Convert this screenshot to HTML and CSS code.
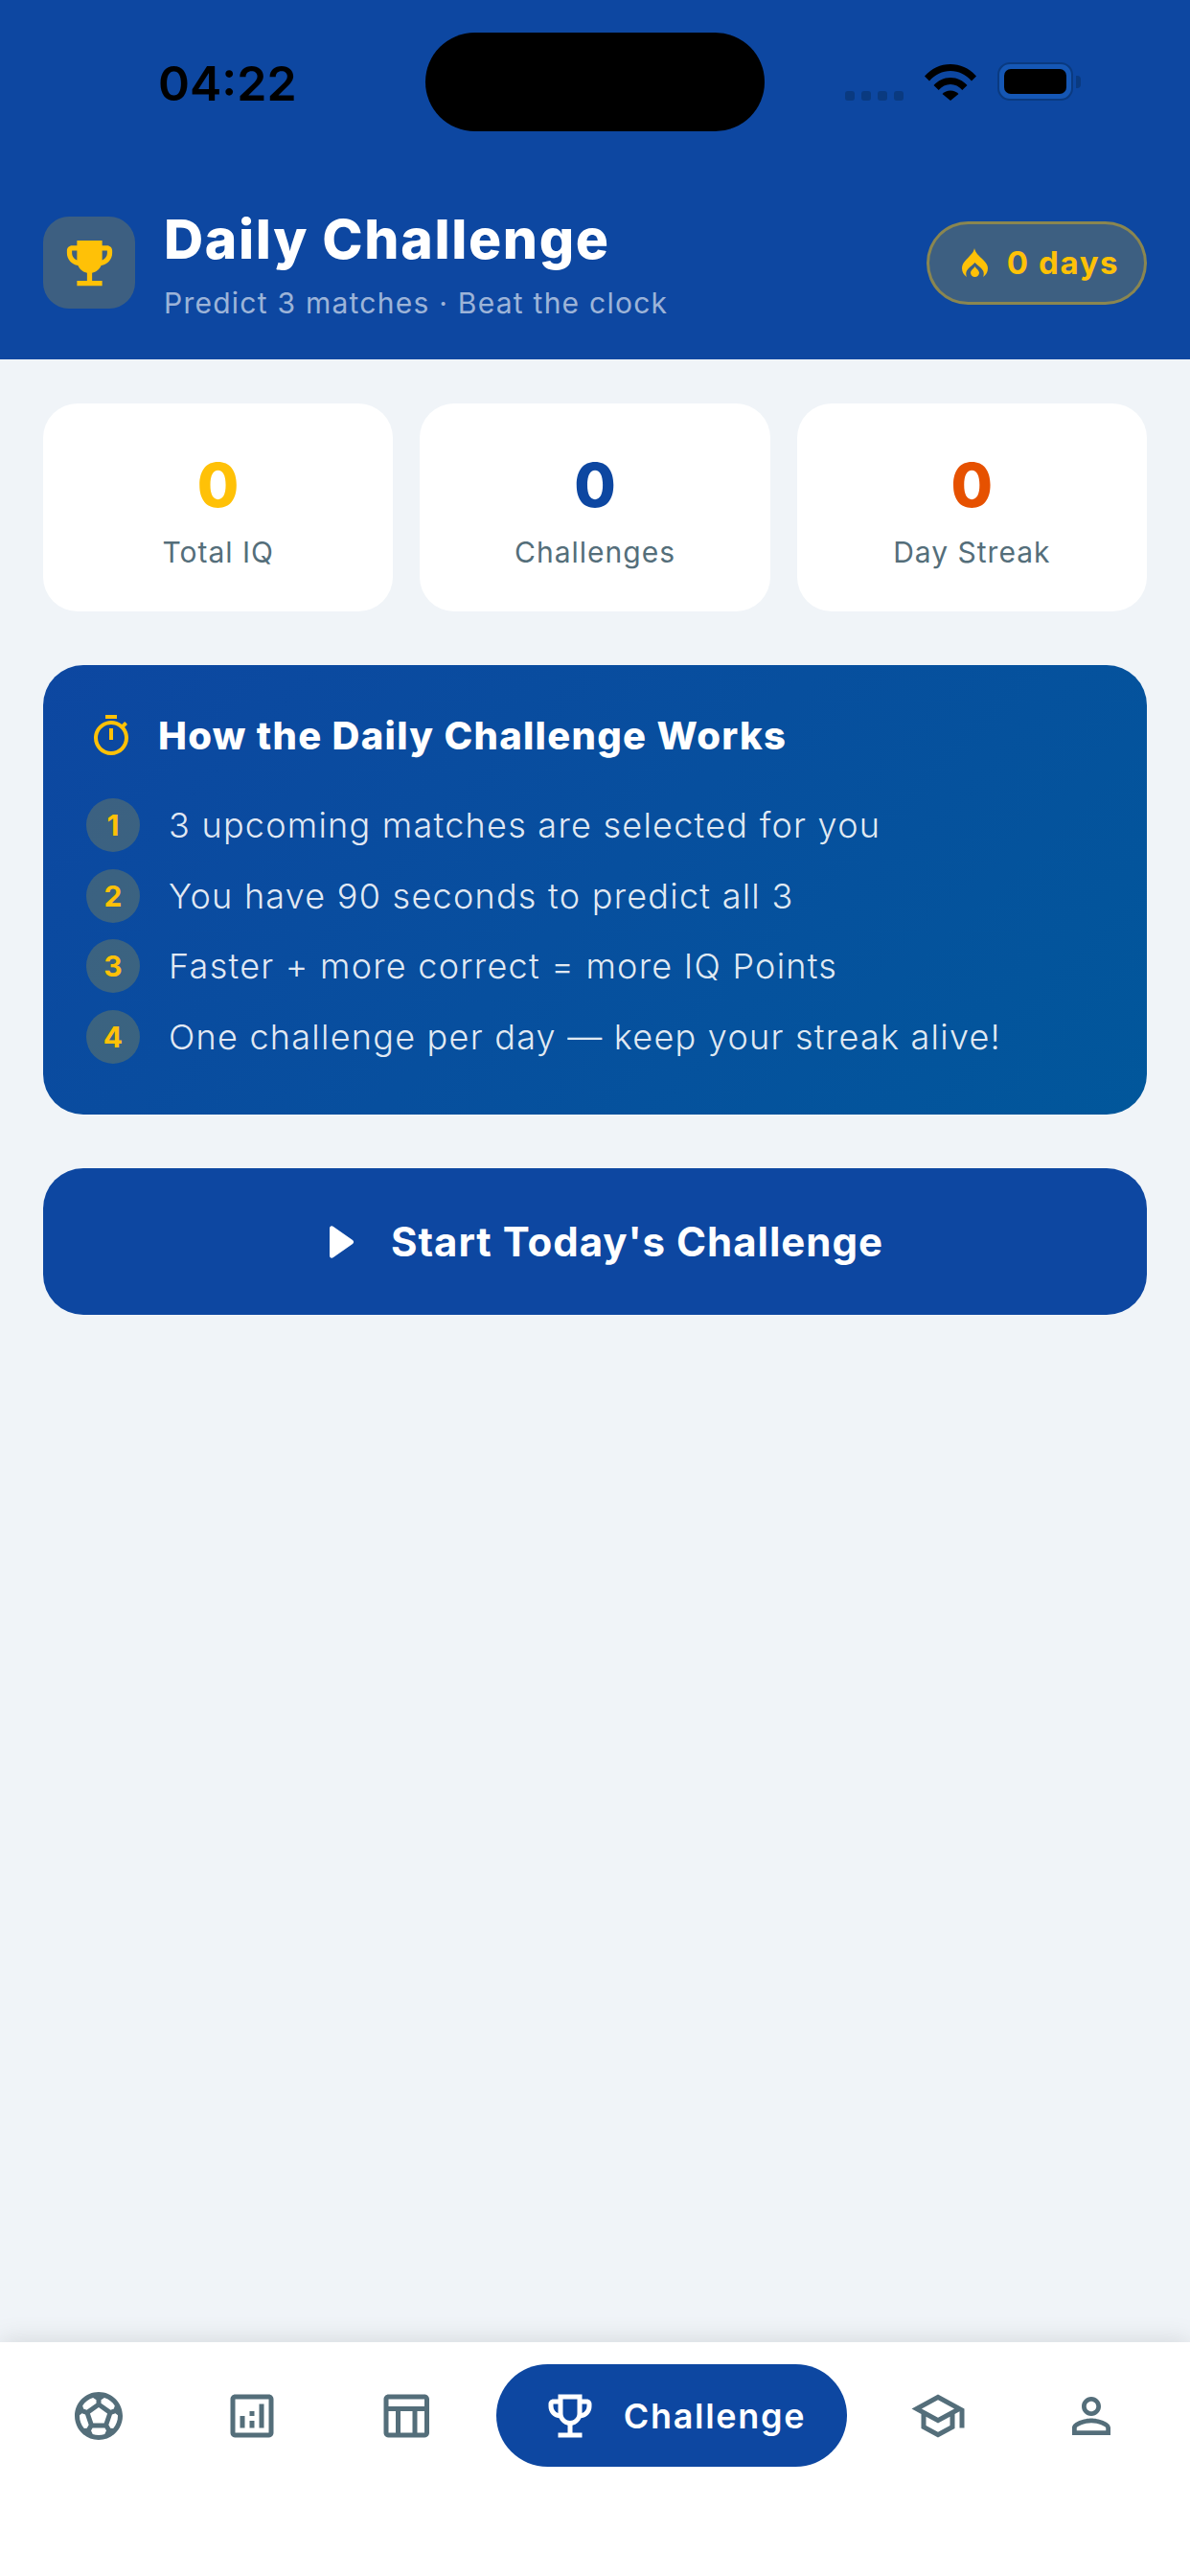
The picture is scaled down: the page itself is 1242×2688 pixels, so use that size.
FILE: index.html
```html
<!DOCTYPE html>
<html lang="en">
<head>
    <meta charset="UTF-8">
    <meta name="viewport" content="width=device-width, initial-scale=1.0">
    <title>Daily Challenge</title>
    <link rel="stylesheet" href="styles.css">
</head>
<body>
    <header class="header">
        <div class="status-bar">
            <span class="status-time">04:22</span>
            <div class="island"></div>
            <div class="status-icons">
                <div class="signal"><i></i><i></i><i></i><i></i></div>
                <svg class="wifi" viewBox="0 0 54 38"><path d="M0 12.500C7 4.500 16.500 0 27 0s20 4.500 27 12.500l-5 5C43 10.800 35.500 7 27 7S11 10.800 5 17.500z"/><path d="M9.500 22C14 17 20 14 27 14s13 3 17.500 8l-5.200 5C36 23.300 31.800 21 27 21s-9 2.300-12.300 6z"/><path d="M18.500 31c2.200-2.200 5.200-3.500 8.500-3.500s6.300 1.300 8.500 3.500L27 38z"/></svg>
                <div class="battery"><div class="battery-fill"></div></div>
                <div class="battery-nub"></div>
            </div>
        </div>
        <div class="header-row">
            <div class="header-icon">
                <svg viewBox="0 0 24 24"><path d="M19 5h-2V3H7v2H5c-1.100 0-2 .9-2 2v1c0 2.550 1.920 4.630 4.390 4.940.63 1.500 1.980 2.630 3.610 2.960V19H7v2h10v-2h-4v-3.100c1.630-.33 2.980-1.460 3.610-2.960C19.080 12.630 21 10.550 21 8V7c0-1.100-.9-2-2-2zM5 8V7h2v3.820C5.840 10.400 5 9.300 5 8zm14 0c0 1.300-.84 2.400-2 2.820V7h2v1z"/></svg>
            </div>
            <div class="header-text">
                <h1>Daily Challenge</h1>
                <p>Predict 3 matches · Beat the clock</p>
            </div>
            <div class="streak-pill">
                <svg viewBox="0 0 27 30"><path d="M13 0C14 5 18 8 22 12 25.500 15.500 27 18 27 21 27 25 25 28 22 30 23 28 23 25.500 22 23.500 20.500 20.500 17 18.500 13.500 15 10 18.500 6.500 20.500 5 23.500 4 25.500 4 28 5 30 2 28 0 25 0 21 0 15 5 12 9 7 11 5 12.500 3 13 0z"/><path d="M13.500 19c1.300 2.500 4.500 4 4.500 6.800a4.500 4.200 0 0 1-9 0c0-2.800 3.200-4.300 4.500-6.800z"/></svg>
                <span>0 days</span>
            </div>
        </div>
    </header>

    <main class="content">
        <section class="stats">
            <div class="stat-card">
                <div class="stat-value amber">0</div>
                <div class="stat-label">Total IQ</div>
            </div>
            <div class="stat-card">
                <div class="stat-value blue">0</div>
                <div class="stat-label">Challenges</div>
            </div>
            <div class="stat-card">
                <div class="stat-value orange">0</div>
                <div class="stat-label">Day Streak</div>
            </div>
        </section>

        <section class="how-card">
            <div class="how-title">
                <svg viewBox="0 0 24 24"><path d="M15 1H9v2h6V1zm-4 13h2V8h-2v6zm8.030-6.610 1.420-1.420c-.43-.51-.9-.99-1.410-1.410l-1.420 1.420C16.070 4.740 14.120 4 12 4c-4.970 0-9 4.030-9 9s4.020 9 9 9 9-4.030 9-9c0-2.120-.74-4.070-1.970-5.610zM12 20c-3.870 0-7-3.130-7-7s3.130-7 7-7 7 3.130 7 7-3.130 7-7 7z"/></svg>
                <h2>How the Daily Challenge Works</h2>
            </div>
            <ul class="steps">
                <li><span class="step-num">1</span>3 upcoming matches are selected for you</li>
                <li><span class="step-num">2</span>You have 90 seconds to predict all 3</li>
                <li><span class="step-num">3</span>Faster + more correct = more IQ Points</li>
                <li><span class="step-num">4</span>One challenge per day — keep your streak alive!</li>
            </ul>
        </section>

        <button class="start-btn">
            <svg viewBox="0 0 26 34"><path d="M0 3c0-2.500 2-3.500 4-2l20 14c1.500 1.200 1.500 2.800 0 4L4 33c-2 1.500-4 .5-4-2z"/></svg>
            <span>Start Today's Challenge</span>
        </button>
    </main>

    <nav class="bottom-nav">
        <div class="nav-item">
            <svg viewBox="0 0 24 24"><path d="M12 2C6.480 2 2 6.480 2 12s4.480 10 10 10 10-4.480 10-10S17.520 2 12 2zm1 3.300 1.350-.95c1.820.56 3.370 1.760 4.380 3.340l-.39 1.340-1.350.46L13 6.700V5.300zm-3.350-.95L11 5.300v1.400L7.010 9.490l-1.350-.46-.39-1.340c1.010-1.570 2.560-2.770 4.380-3.340zM7.080 17.110l-1.140.1C4.730 15.810 4 13.990 4 12c0-.12.01-.23.02-.35l1-.73 1.380.48 1.460 4.340-.78 1.370zm7.420 2.480c-.79.26-1.630.41-2.500.41s-1.710-.15-2.500-.41l-.69-1.490.64-1.100h5.110l.64 1.110-.7 1.480zM14.270 15H9.730l-1.350-4.020L12 8.440l3.630 2.540L14.270 15zm3.790 2.210-1.140-.1-.79-1.370 1.460-4.340 1.390-.47 1 .73c.01.11.02.22.02.34 0 1.990-.73 3.810-1.940 5.210z"/></svg>
        </div>
        <div class="nav-item">
            <svg viewBox="0 0 24 24"><path d="M19 3H5c-1.100 0-2 .9-2 2v14c0 1.100.9 2 2 2h14c1.100 0 2-.9 2-2V5c0-1.100-.9-2-2-2zm0 16H5V5h14v14zM7 12h2v5H7zm8-5h2v10h-2zm-4 7h2v3h-2zm0-4h2v2h-2z"/></svg>
        </div>
        <div class="nav-item">
            <svg viewBox="0 0 24 24"><path d="M20 3H5c-1.100 0-2 .9-2 2v14c0 1.100.9 2 2 2h15c1.100 0 2-.9 2-2V5c0-1.100-.9-2-2-2zm0 2v3H5V5h15zm-5 14h-5v-9h5v9zM5 10h3v9H5v-9zm12 9v-9h3v9h-3z"/></svg>
        </div>
        <div class="nav-active">
            <svg viewBox="0 0 24 24"><path d="M19 5h-2V3H7v2H5c-1.100 0-2 .9-2 2v1c0 2.550 1.920 4.630 4.390 4.940.63 1.500 1.980 2.630 3.610 2.960V19H7v2h10v-2h-4v-3.100c1.630-.33 2.980-1.460 3.610-2.960C19.080 12.630 21 10.550 21 8V7c0-1.100-.9-2-2-2zM5 8V7h2v3.820C5.840 10.400 5 9.300 5 8zm7 6c-1.650 0-3-1.350-3-3V5h6v6c0 1.650-1.350 3-3 3zm7-6c0 1.300-.84 2.400-2 2.820V7h2v1z"/></svg>
            <span>Challenge</span>
        </div>
        <div class="nav-item">
            <svg viewBox="0 0 24 24"><path d="M12 3 1 9l4 2.180v6L12 21l7-3.820v-6l2-1.090V17h2V9L12 3zm6.820 6L12 12.720 5.180 9 12 5.280 18.820 9zM17 15.990l-5 2.730-5-2.730v-3.720L12 15l5-2.730v3.720z"/></svg>
        </div>
        <div class="nav-item">
            <svg viewBox="0 0 24 24"><path d="M12 5.900c1.160 0 2.100.94 2.100 2.100s-.94 2.100-2.100 2.100S9.900 9.160 9.900 8s.94-2.100 2.100-2.100m0 9c2.970 0 6.100 1.460 6.100 2.100v1.100H5.900V17c0-.64 3.130-2.100 6.100-2.100M12 4C9.790 4 8 5.790 8 8s1.790 4 4 4 4-1.790 4-4-1.790-4-4-4zm0 9c-2.670 0-8 1.340-8 4v3h16v-3c0-2.660-5.330-4-8-4z"/></svg>
        </div>
    </nav>
</body>
</html>
```

FILE: styles.css
```css
* {
    box-sizing: border-box;
}
body {
    font-family: 'Inter', sans-serif;
    margin: 0;
    height: 100vh;
    display: flex;
    flex-direction: column;
    background: #f0f4f8;
    overflow: hidden;
}
svg {
    display: block;
    fill: currentColor;
    flex: none;
}

/* header */
.header {
    background: #0d47a1;
    height: 375px;
    padding-top: 34px;
}
.status-bar {
    display: grid;
    grid-template-columns: 444px 354px 1fr;
    height: 103px;
    align-items: center;
}
.status-time {
    padding-left: 165px;
    padding-top: 3px;
    font-size: 50px;
    font-weight: 600;
    color: #000;
}
.island {
    background: #000;
    height: 103px;
    border-radius: 52px;
}
.status-icons {
    display: flex;
    align-items: flex-end;
    padding-left: 84px;
    height: 38px;
}
.signal {
    display: flex;
    gap: 7px;
    margin-right: 22px;
}
.signal i {
    width: 10px;
    height: 10px;
    border-radius: 3px;
    background: #0a3a80;
}
.wifi {
    width: 54px;
    height: 38px;
    color: #000;
    margin-right: 22px;
}
.battery {
    width: 79px;
    height: 40px;
    border: 2px solid #0a3a80;
    border-radius: 13px;
    padding: 5px;
    background: #1557b5;
}
.battery-fill {
    height: 100%;
    background: #000;
    border-radius: 7px;
}
.battery-nub {
    width: 5px;
    height: 13px;
    margin: 0 0 13px 3px;
    background: #0a3a80;
    border-radius: 0 4px 4px 0;
}
.header-row {
    display: flex;
    align-items: center;
    margin-top: 76px;
    padding: 0 45px;
}
.header-icon {
    width: 96px;
    height: 96px;
    border-radius: 27px;
    background: rgba(255, 193, 7, 0.2);
    color: #ffc107;
    display: flex;
    align-items: center;
    justify-content: center;
}
.header-icon svg {
    width: 63px;
    height: 63px;
}
.header-text {
    flex: 1;
    margin-left: 30px;
    padding-top: 4px;
}
h1 {
    margin: 0;
    font-size: 57px;
    font-weight: 800;
    line-height: 66px;
    color: #fff;
    letter-spacing: 1.65px;
}
.header-text p {
    margin: 14px 0 0;
    font-size: 30px;
    line-height: 38px;
    color: rgba(255, 255, 255, 0.6);
    letter-spacing: 1.25px;
}
.streak-pill {
    width: 230px;
    height: 87px;
    padding-left: 8px;
    border: 3px solid rgba(255, 193, 7, 0.4);
    border-radius: 44px;
    background: rgba(255, 193, 7, 0.2);
    color: #ffc107;
    display: flex;
    align-items: center;
    justify-content: center;
    gap: 20px;
    font-size: 33px;
    font-weight: 700;
    letter-spacing: 1.6px;
}
.streak-pill svg {
    width: 27px;
    height: 30px;
}

/* content */
.content {
    flex: 1;
    padding: 46px 45px 0;
}
.stats {
    display: grid;
    grid-template-columns: repeat(3, 1fr);
    gap: 28px;
}
.stat-card {
    height: 217px;
    background: #fff;
    border-radius: 36px;
    text-align: center;
    padding-top: 47px;
}
.stat-value {
    font-size: 63px;
    font-weight: 800;
    line-height: 76px;
}
.amber { color: #ffc107; }
.blue { color: #0d47a1; }
.orange { color: #e65100; }
.stat-label {
    margin-top: 12px;
    font-size: 30px;
    line-height: 40px;
    color: #546e7a;
    letter-spacing: 1px;
}
.how-card {
    margin-top: 56px;
    height: 469px;
    border-radius: 42px;
    background: linear-gradient(135deg, #0d47a1, #01579b);
    padding: 46px 45px 0;
}
.how-title {
    display: flex;
    align-items: center;
    padding-left: 2px;
}
.how-title svg {
    width: 48px;
    height: 48px;
    color: #ffc107;
}
h2 {
    margin: 0 0 0 25px;
    font-size: 40px;
    font-weight: 800;
    line-height: 56px;
    color: #fff;
    letter-spacing: 1.3px;
}
.steps {
    list-style: none;
    margin: 37px 0 0;
    padding: 0;
}
.steps li {
    display: flex;
    align-items: center;
    height: 56px;
    margin-bottom: 17.500px;
    font-size: 36px;
    font-weight: 300;
    color: rgba(255, 255, 255, 0.9);
    letter-spacing: 1.25px;
}
.step-num {
    width: 56px;
    height: 56px;
    margin-right: 30px;
    border-radius: 50%;
    background: rgba(255, 193, 7, 0.2);
    color: #ffc107;
    font-size: 30px;
    font-weight: 700;
    display: flex;
    align-items: center;
    justify-content: center;
    letter-spacing: 0;
}
.start-btn {
    width: 100%;
    height: 153px;
    margin-top: 56px;
    padding: 0 0 0 24px;
    border: none;
    border-radius: 42px;
    background: #0d47a1;
    color: #fff;
    font-family: inherit;
    font-size: 42px;
    font-weight: 700;
    letter-spacing: 1px;
    display: flex;
    align-items: center;
    justify-content: center;
    gap: 38px;
}
.start-btn svg {
    width: 26px;
    height: 34px;
}

/* bottom nav */
.bottom-nav {
    height: 244px;
    background: #fff;
    box-shadow: 0 -4px 24px rgba(0, 0, 0, 0.1);
    display: flex;
    align-items: flex-start;
    padding: 23px 23px 0;
    color: #546e7a;
}
.nav-item {
    width: 160px;
    height: 107px;
    display: flex;
    align-items: center;
    justify-content: center;
}
.nav-item svg, .nav-active svg {
    width: 60px;
    height: 60px;
}
.nav-active {
    width: 366px;
    height: 107px;
    margin: 0 15px;
    padding-left: 4px;
    border-radius: 54px;
    background: #0d47a1;
    color: #fff;
    display: flex;
    align-items: center;
    justify-content: center;
    gap: 26px;
    font-size: 36px;
    font-weight: 600;
    letter-spacing: 1.7px;
}
```
